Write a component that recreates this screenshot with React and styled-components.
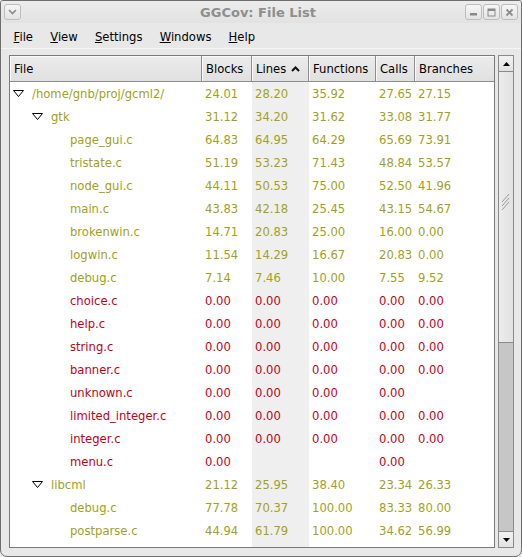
import React from "react";
import styled, { createGlobalStyle } from "styled-components";

const Global = createGlobalStyle`
  html, body { margin: 0; padding: 0; background: #e8e8e8; }
  body { width: 522px; height: 557px; overflow: hidden; font-family: "DejaVu Sans", "Liberation Sans", sans-serif; }
  * { box-sizing: border-box; }
`;

const OLIVE = "#a1a11c";
const RED = "#c20018";
const FS = "11.6px";

const Window = styled.div`
  width: 522px;
  height: 557px;
  display: flex;
  flex-direction: column;
  background: #e8e8e8;
  border: 1px solid #6e6e6e;
  border-radius: 3px 3px 7px 7px;
  overflow: hidden;
`;

const TitleBar = styled.div`
  height: 22px;
  flex: none;
  display: flex;
  align-items: center;
  padding: 0 3px;
  background: linear-gradient(#ececec, #e2e2e2);
`;

const Title = styled.div`
  flex: 1;
  text-align: center;
  font-weight: bold;
  font-size: 13px;
  color: #8e8e8e;
  padding-left: 30px;
`;

const TitleButton = styled.div`
  width: 17px;
  height: 16px;
  margin-left: ${(p) => p.$gap || 0}px;
  border: 1px solid #bdbdbd;
  border-radius: 3px;
  background: linear-gradient(#f6f6f6, #e4e4e4);
  display: flex;
  align-items: center;
  justify-content: center;
`;

const MenuBar = styled.div`
  height: 26px;
  flex: none;
  display: flex;
  align-items: center;
  padding: 2px 0 0 4px;
  border-bottom: 1px solid #f6f6f6;
`;

const MenuItem = styled.div`
  padding: 0 8.6px;
  font-size: ${FS};
  color: #000;
  u { text-decoration: underline; text-underline-offset: 1px; }
`;

const Content = styled.div`
  flex: 1;
  display: flex;
  gap: 3px;
  padding: 6px 6px 8px 8px;
  min-height: 0;
`;

const TreeFrame = styled.div`
  width: 486px;
  flex: none;
  border: 1px solid #7a7a7a;
  background: #fff;
  display: flex;
  flex-direction: column;
  overflow: hidden;
`;

const COLS = "192px 50px 57px 67px 39px 79px";

const HeaderRow = styled.div`
  display: grid;
  grid-template-columns: ${COLS};
  height: 26px;
  flex: none;
`;

const HeaderCell = styled.div`
  display: flex;
  align-items: center;
  padding-left: 4px;
  font-size: ${FS};
  color: #000;
  background: linear-gradient(#ececec, #e0e0e0);
  border-right: 1px solid #8e8e8e;
  border-bottom: 1px solid #8e8e8e;
  box-shadow: inset 1px 1px 0 #fafafa;
  gap: 5px;
  &:last-child { border-right: none; }
`;

const Body = styled.div`
  flex: 1;
  position: relative;
  overflow: hidden;
`;

const Row = styled.div`
  display: grid;
  grid-template-columns: ${COLS};
  height: 23px;
  font-size: ${FS};
  color: ${(p) => (p.$red ? RED : OLIVE)};
`;

const Cell = styled.div`
  display: flex;
  align-items: center;
  padding-left: ${(p) => p.$pad ?? 3}px;
  white-space: nowrap;
`;

const Expander = styled.span`
  width: 19px;
  flex: none;
  display: flex;
  align-items: center;
`;

const Filler = styled.div`
  display: grid;
  grid-template-columns: ${COLS};
  position: absolute;
  inset: 0;
  z-index: 0;
  pointer-events: none;
`;

const FillCol = styled.div`
  background: ${(p) => (p.$sorted ? "#efefef" : "transparent")};
`;

const Rows = styled.div`
  position: relative;
  z-index: 1;
`;

const Scrollbar = styled.div`
  width: 16px;
  flex: none;
  display: flex;
  flex-direction: column;
  border: 1px solid #8a8a8a;
  background: #c6c6c6;
`;

const ArrowButton = styled.div`
  height: 16px;
  flex: none;
  background: linear-gradient(#f2f2f2, #e2e2e2);
  border-${(p) => (p.$down ? "top" : "bottom")}: 1px solid #8a8a8a;
  display: flex;
  align-items: center;
  justify-content: center;
`;

const Track = styled.div`
  flex: 1;
  display: flex;
  flex-direction: column;
`;

const Thumb = styled.div`
  height: 271px;
  flex: none;
  background: linear-gradient(90deg, #ececec, #e2e2e2);
  border-bottom: 1px solid #8a8a8a;
  display: flex;
  align-items: flex-start;
  justify-content: center;
  padding-top: 121px;
`;

const data = [
  { n: "/home/gnb/proj/gcml2/", l: 0, e: true, v: ["24.01", "28.20", "35.92", "27.65", "27.15"] },
  { n: "gtk", l: 1, e: true, v: ["31.12", "34.20", "31.62", "33.08", "31.77"] },
  { n: "page_gui.c", l: 2, v: ["64.83", "64.95", "64.29", "65.69", "73.91"] },
  { n: "tristate.c", l: 2, v: ["51.19", "53.23", "71.43", "48.84", "53.57"] },
  { n: "node_gui.c", l: 2, v: ["44.11", "50.53", "75.00", "52.50", "41.96"] },
  { n: "main.c", l: 2, v: ["43.83", "42.18", "25.45", "43.15", "54.67"] },
  { n: "brokenwin.c", l: 2, v: ["14.71", "20.83", "25.00", "16.00", "0.00"] },
  { n: "logwin.c", l: 2, v: ["11.54", "14.29", "16.67", "20.83", "0.00"] },
  { n: "debug.c", l: 2, v: ["7.14", "7.46", "10.00", "7.55", "9.52"] },
  { n: "choice.c", l: 2, r: true, v: ["0.00", "0.00", "0.00", "0.00", "0.00"] },
  { n: "help.c", l: 2, r: true, v: ["0.00", "0.00", "0.00", "0.00", "0.00"] },
  { n: "string.c", l: 2, r: true, v: ["0.00", "0.00", "0.00", "0.00", "0.00"] },
  { n: "banner.c", l: 2, r: true, v: ["0.00", "0.00", "0.00", "0.00", "0.00"] },
  { n: "unknown.c", l: 2, r: true, v: ["0.00", "0.00", "0.00", "0.00", ""] },
  { n: "limited_integer.c", l: 2, r: true, v: ["0.00", "0.00", "0.00", "0.00", "0.00"] },
  { n: "integer.c", l: 2, r: true, v: ["0.00", "0.00", "0.00", "0.00", "0.00"] },
  { n: "menu.c", l: 2, r: true, v: ["0.00", "", "", "0.00", ""] },
  { n: "libcml", l: 1, e: true, v: ["21.12", "25.95", "38.40", "23.34", "26.33"] },
  { n: "debug.c", l: 2, v: ["77.78", "70.37", "100.00", "83.33", "80.00"] },
  { n: "postparse.c", l: 2, v: ["44.94", "61.79", "100.00", "34.62", "56.99"] },
];

const Triangle = () => (
  <svg width="11" height="8" viewBox="0 0 11 8">
    <polygon points="0.5,0.5 10.5,0.5 5.5,6.5" fill="#fff" stroke="#000" strokeWidth="1" />
  </svg>
);

const Caret = ({ down }) => (
  <svg width="9" height="6" viewBox="0 0 9 6">
    <polygon points={down ? "1,1 8,1 4.5,5" : "1,5 8,5 4.5,1"} fill="#000" />
  </svg>
);

const SortCaret = () => (
  <svg width="9" height="6" viewBox="0 0 9 6">
    <polyline points="1,5 4.5,1.5 8,5" fill="none" stroke="#111" strokeWidth="2" />
  </svg>
);

const Grip = () => (
  <svg width="10" height="18" viewBox="0 0 10 18">
    <g stroke="#9a9a9a" strokeWidth="1">
      <line x1="1" y1="9" x2="8" y2="1" />
      <line x1="1" y1="13" x2="8" y2="5" />
      <line x1="1" y1="17" x2="8" y2="9" />
    </g>
  </svg>
);

const headers = ["File", "Blocks", "Lines", "Functions", "Calls", "Branches"];

export default function App() {
  return (
    <>
      <Global />
      <Window>
        <TitleBar>
          <TitleButton>
            <svg width="9" height="6" viewBox="0 0 9 6">
              <polyline points="1,1 4.5,4.5 8,1" fill="none" stroke="#8a8a8a" strokeWidth="1.6" />
            </svg>
          </TitleButton>
          <Title>GGCov: File List</Title>
          <TitleButton>
            <svg width="9" height="9" viewBox="0 0 9 9">
              <rect x="1" y="5" width="7" height="2.5" fill="#8a8a8a" />
            </svg>
          </TitleButton>
          <TitleButton $gap={1}>
            <svg width="9" height="9" viewBox="0 0 9 9">
              <rect x="1" y="1" width="7" height="7" fill="none" stroke="#8a8a8a" strokeWidth="1" />
              <rect x="1" y="1" width="7" height="2" fill="#8a8a8a" />
            </svg>
          </TitleButton>
          <TitleButton $gap={1}>
            <svg width="9" height="9" viewBox="0 0 9 9">
              <g stroke="#8a8a8a" strokeWidth="1.8">
                <line x1="1.5" y1="1.5" x2="7.5" y2="7.5" />
                <line x1="7.5" y1="1.5" x2="1.5" y2="7.5" />
              </g>
            </svg>
          </TitleButton>
        </TitleBar>
        <MenuBar>
          <MenuItem><u>F</u>ile</MenuItem>
          <MenuItem><u>V</u>iew</MenuItem>
          <MenuItem><u>S</u>ettings</MenuItem>
          <MenuItem><u>W</u>indows</MenuItem>
          <MenuItem><u>H</u>elp</MenuItem>
        </MenuBar>
        <Content>
          <TreeFrame>
            <HeaderRow>
              {headers.map((h) => (
                <HeaderCell key={h}>
                  {h}
                  {h === "Lines" && <SortCaret />}
                </HeaderCell>
              ))}
            </HeaderRow>
            <Body>
              <Filler>
                {headers.map((h) => (
                  <FillCol key={h} $sorted={h === "Lines"} />
                ))}
              </Filler>
              <Rows>
                {data.map((d, i) => (
                  <Row key={i} $red={d.r}>
                    <Cell $pad={3 + d.l * 19}>
                      <Expander>{d.e && <Triangle />}</Expander>
                      {d.n}
                    </Cell>
                    {d.v.map((x, j) => (
                      <Cell key={j}>{x}</Cell>
                    ))}
                  </Row>
                ))}
              </Rows>
            </Body>
          </TreeFrame>
          <Scrollbar>
            <ArrowButton><Caret /></ArrowButton>
            <Track>
              <Thumb><Grip /></Thumb>
            </Track>
            <ArrowButton $down><Caret down /></ArrowButton>
          </Scrollbar>
        </Content>
      </Window>
    </>
  );
}
